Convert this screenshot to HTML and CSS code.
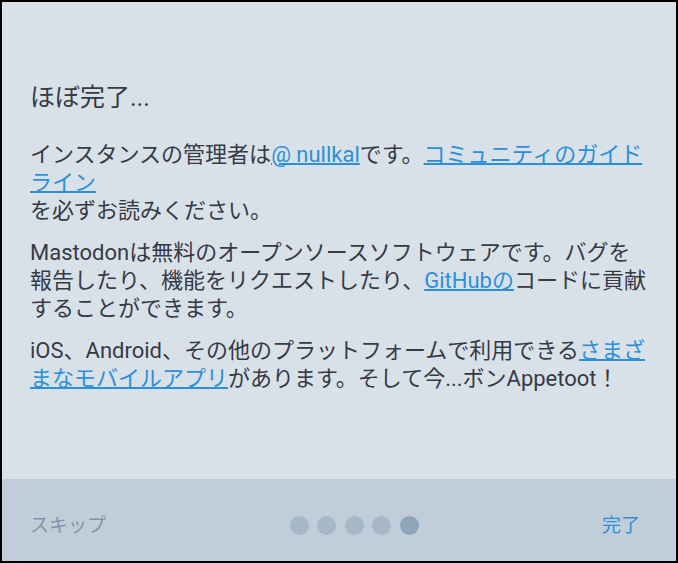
FILE: index.html
```html
<!DOCTYPE html>
<html>

<head>
  <title>onboarding</title>
  <link rel="stylesheet" href="styles.css">
</head>

<body>
  <div class="modal">
    <div class="page">
      <h1>ほぼ完了...</h1>
      <p>インスタンスの管理者は<a href="#">@ nullkal</a>です。<a href="#">コミュニティのガイドライン</a><br>を必ずお読みください。</p>
      <p>Mastodonは無料のオープンソースソフトウェアです。バグを報告したり、機能をリクエストしたり、<a href="#">GitHubの</a>コードに貢献することができます。</p>
      <p>iOS、Android、その他のプラットフォームで利用できる<a href="#">さまざまなモバイルアプリ</a>があります。そして今...ボンAppetoot！</p>
    </div>
    <div class="modal-footer">
      <button class="skip">スキップ</button>
      <div class="dots">
        <span class="dot"></span>
        <span class="dot"></span>
        <span class="dot"></span>
        <span class="dot"></span>
        <span class="dot active"></span>
      </div>
      <button class="done">完了</button>
    </div>
  </div>
</body>

</html>
```

FILE: styles.css
```css
html {
  background-color: #000;
  height: 100%;
}

body {
  margin: 0;
  height: 100%;
  font-family: Roboto, "Noto Sans CJK JP", sans-serif;
}

.modal {
  box-sizing: border-box;
  height: 100%;
  border: 2px solid #000;
  background-color: #d9e1e8;
  color: #363a46;
  display: flex;
  flex-direction: column;
}

.page {
  flex: 1;
  padding: 82px 26px 0 28px;
}

h1 {
  margin: 0 0 29px;
  font-size: 25px;
  font-weight: 400;
  line-height: 28px;
}

p {
  margin: 0 0 14px;
  font-size: 22px;
  line-height: 28px;
}

a {
  color: #2b90d9;
  text-decoration: underline;
  text-decoration-thickness: 2px;
}

.modal-footer {
  box-sizing: border-box;
  height: 82px;
  padding: 10px 36px 0 28px;
  background-color: #c1ced9;
  display: flex;
  align-items: center;
  justify-content: space-between;
}

.modal-footer button {
  background: none;
  border: none;
  padding: 0;
  font: 19px/1 Roboto, "Noto Sans CJK JP", sans-serif;
  cursor: pointer;
}

.skip {
  color: #8094ab;
}

.done {
  color: #2b90d9;
}

.dots {
  display: flex;
  gap: 8.5px;
}

.dot {
  width: 19px;
  height: 19px;
  border-radius: 50%;
  background-color: #a6b8c8;
}

.dot.active {
  background-color: #8ea4b9;
}
```
